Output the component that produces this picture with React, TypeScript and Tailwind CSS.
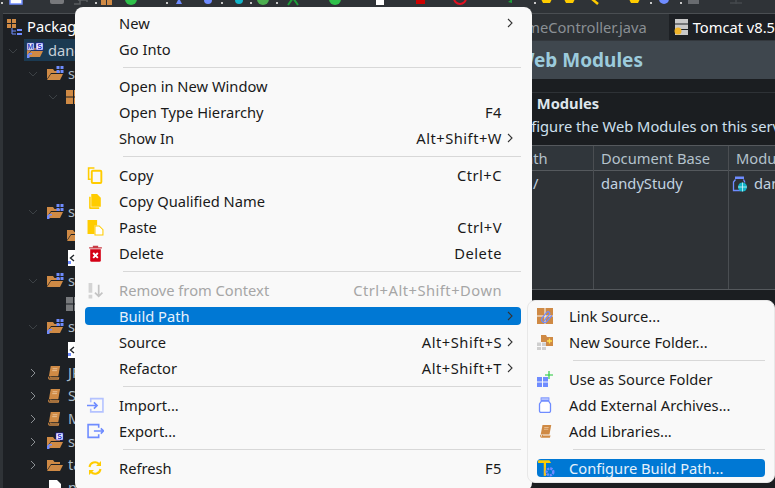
import type { ReactNode } from 'react';

const ORANGE = '#cf8a45';
const BLUE = '#6f8cff';
const YELLOW = '#ffcc00';

// icons are all drawn on a 16x16 box
function Ico({ children, size = 16 }: { children: ReactNode; size?: number }) {
  return (
    <svg width={size} height={size} viewBox="0 0 16 16" className="shrink-0" fill="none">
      {children}
    </svg>
  );
}

const CopyIcon = () => (
  <Ico size={17}>
    <path d="M7 1H1.500v10.500H3.500" stroke={YELLOW} strokeWidth="1.500" />
    <rect x="4.500" y="3.500" width="9" height="11.500" rx="1" stroke={YELLOW} strokeWidth="1.800" />
  </Ico>
);
const CopyNameIcon = () => (
  <Ico size={17}>
    <path d="M2 3.500h1.500v10h8V15H3a1 1 0 0 1-1-1z" fill={YELLOW} />
    <path d="M4 1h5.500L13 4.500V13H4z" fill={YELLOW} />
  </Ico>
);
const PasteIcon = () => (
  <Ico size={17}>
    <path d="M0.500 1h9v5H7v8H0.500z" fill={YELLOW} />
    <path d="M7.500 6.500h4l3.500 3.500v5H7.500z" fill="#fff" stroke={YELLOW} strokeWidth="1" />
  </Ico>
);
const DeleteIcon = () => (
  <Ico size={17}>
    <path d="M2 2h12v1.200H2zM5.500 0.800h5V2h-5z" fill="#c83a44" />
    <path d="M3 4h10v10.500a1.200 1.200 0 0 1-1.200 1.200H4.200A1.200 1.200 0 0 1 3 14.500z" fill="#d40015" />
    <path d="M5.800 7.500l4.400 4.600M10.200 7.500l-4.400 4.600" stroke="#fff" strokeWidth="1.800" />
  </Ico>
);
const RemoveIcon = () => (
  <Ico size={17}>
    <path d="M1.500 1h3.500v9H1.500zM1.500 12h3.500v3.500H1.500z" fill="#d4d4d4" />
    <path d="M11 2.500v11M7.500 10L11 13.500 14.500 10" stroke="#c4c4c4" strokeWidth="1.600" />
  </Ico>
);
const ImportIcon = () => (
  <Ico size={17}>
    <path d="M3.500 5V1.500h11.500v12.500H3.500v-3" stroke="#b4c2ff" strokeWidth="1.500" />
    <path d="M0 8h9M6.500 5L9.500 8l-3 3" stroke={BLUE} strokeWidth="1.500" />
  </Ico>
);
const ExportIcon = () => (
  <Ico size={17}>
    <path d="M11 4.500V1.500H1v12h10v-3" stroke={BLUE} strokeWidth="1.500" />
    <path d="M6.500 7.500h9M13 5L15.500 7.500 13 10" stroke={BLUE} strokeWidth="1.500" />
  </Ico>
);
const RefreshIcon = () => (
  <Ico size={16}>
    <path d="M2.500 7a5.500 5.500 0 0 1 9.500-3M13.500 9a5.500 5.500 0 0 1-9.500 3" stroke={YELLOW} strokeWidth="2" />
    <path d="M14 1v5h-5zM2 15v-5h5z" fill={YELLOW} />
  </Ico>
);

const LinkSourceIcon = () => (
  <Ico>
    <path d="M0 0h7.500v7.500H0zM8.500 0H16v7.500H8.500zM0 8.500h7.500V16H0zM8.500 8.500H16V16H8.500z" fill={ORANGE} />
    <path d="M7 13l5.500-6.500a1.800 1.800 0 0 0-2.600-2.400L5 10a3 3 0 0 0 4.300 4L15 7.500" stroke={BLUE} strokeWidth="1.200" />
  </Ico>
);
const NewSourceFolderIcon = () => (
  <Ico>
    <path d="M4 1h5l1 2h6v9H9V8H4z" fill={ORANGE} />
    <path d="M12.500 4.500v5M10 7h5" stroke="#ffe14d" strokeWidth="1.300" />
    <path d="M0 8.500h4V12H0zM5 8.500h4V12H5zM0 13h4v3H0zM5 13h4v3H5z" fill="#cfcfcf" />
  </Ico>
);
const UseAsSourceIcon = () => (
  <Ico>
    <path d="M0 6h5v4.500H0zM6 6h5v4.500H6zM0 11.500h5V16H0zM6 11.500h5V16H6z" fill={BLUE} />
    <path d="M12 0v8M8 4h8" stroke="#22c83a" strokeWidth="1.100" />
  </Ico>
);
const JarIcon = () => (
  <Ico>
    <rect x="4" y="0.800" width="8" height="2.600" fill="#b4c2ff" stroke={BLUE} strokeWidth="0.800" />
    <path d="M4.500 4L2.500 7v7a1.500 1.500 0 0 0 1.500 1.500h8a1.500 1.500 0 0 0 1.500-1.500V7l-2-3z" stroke={BLUE} strokeWidth="1.300" fill="#fff" />
  </Ico>
);
const BookIcon = ({ size = 16 }: { size?: number }) => (
  <Ico size={size}>
    <path d="M4 1h10l-2 11H2z" fill={ORANGE} />
    <path d="M2 12.500C1.500 14 2 15 3 15h9l.4-1.400H4l-.2-1.100" stroke={ORANGE} strokeWidth="1.200" />
    <path d="M6 4h5M5.600 6h5" stroke="#f2d2ad" strokeWidth="0.800" />
  </Ico>
);
const ConfigureIcon = () => (
  <Ico size={18}>
    <path d="M1 1h10l1.500 2.500H8v3.500H6V3.500H1z" fill={YELLOW} />
    <path d="M6 7h2v8H6z" fill="#f0c020" />
    <circle cx="11.500" cy="11.500" r="3" stroke={BLUE} strokeWidth="2.200" strokeDasharray="2 0.800" />
  </Ico>
);

const WarJarIcon = () => (
  <Ico>
    <rect x="3" y="0.500" width="9" height="2.500" fill={BLUE} />
    <path d="M3.500 3.500L1.500 6v8.500h8" stroke={BLUE} strokeWidth="1.300" />
    <path d="M11.500 3.500l1.500 3" stroke={BLUE} strokeWidth="1.300" />
    <circle cx="10.500" cy="11" r="4.500" fill="#12b5c9" />
    <path d="M6 11h9M10.500 6.500v9" stroke="#e9fbff" strokeWidth="0.700" />
  </Ico>
);

// little lettered badge from m2e / spring on top of the project folder
function Badge({ x, letter, border }: { x: number; letter: string; border: string }) {
  return (
    <g>
      <rect x={x} y="0" width="7" height="7" fill="#fff" stroke={border} strokeWidth="0.600" />
      <text x={x + 3.500} y="6" textAnchor="middle" fontSize="7" fontWeight="700" fill={border} fontFamily="Liberation Sans">
        {letter}
      </text>
    </g>
  );
}

// folder used by the tree, with optional overlays
function TreeFolder({ overlay }: { overlay?: 'grid' | 'ms' | 's' | 'grid-link' }) {
  return (
    <svg width="18" height="18" viewBox="0 0 18 18" className="shrink-0 overflow-visible" fill="none">
      <path d="M1 4h6l1.500 2H14v2H5L1 14z" fill={ORANGE} />
      <path d="M5 9h12l-3 6H1z" fill={ORANGE} />
      {(overlay === 'grid' || overlay === 'grid-link') && (
        <path d="M10.500 1h3v3h-3zM14.500 1h3v3h-3zM10.500 5h3v3h-3zM14.500 5h3v3h-3z" fill={BLUE} />
      )}
      {overlay === 's' && <Badge x={10} letter="S" border="#1a1acc" />}
      {overlay === 'ms' && (
        <g transform="translate(0 1)">
          <Badge x={1} letter="M" border="#2a3fbf" />
          <Badge x={10} letter="S" border="#1a1acc" />
        </g>
      )}
      {overlay && overlay !== 'grid' && <path d="M1 16v-3l2-2h3v1.500H3.500V16z" fill={BLUE} />}
    </svg>
  );
}

const OrangePackage = ({ grey }: { grey?: boolean }) => (
  <svg width="16" height="16" viewBox="0 0 16 16" className="shrink-0">
    <path d="M0 1h7v6.500H0zM8 1h7v6.500H8zM0 8.500h7V15H0zM8 8.500h7V15H8z" fill={grey ? '#77797c' : ORANGE} />
  </svg>
);

const XmlFile = () => (
  <svg width="16" height="18" viewBox="0 0 16 18" className="shrink-0 ml-[2px]">
    <path d="M0 1h14v16H0z" fill="#fff" />
    <path d="M6 6L2.500 9 6 12" stroke="#22262a" strokeWidth="1.400" fill="none" />
    <path d="M0 12h3v3H0z" fill={BLUE} />
  </svg>
);

const PlainFile = () => (
  <svg width="14" height="16" viewBox="0 0 14 16" className="shrink-0 ml-[2px]">
    <path d="M1 0h8l4 4v12H1z" fill="#fff" />
    <path d="M4 8h6v2H4z" fill="#33373b" />
  </svg>
);

const TreeBook = () => (
  <span className="ml-[1px] flex">
    <BookIcon size={15} />
  </span>
);

type Row = { chevron?: '>' | 'v'; depth: number; icon?: ReactNode; label?: string; selected?: boolean };

const treeRows: Row[] = [
  { chevron: 'v', depth: 0, icon: <TreeFolder overlay="ms" />, label: 'dandyStudy', selected: true },
  { chevron: 'v', depth: 1, icon: <TreeFolder overlay="grid" />, label: 'src/main/java' },
  { chevron: 'v', depth: 2, icon: <OrangePackage />, label: 'com.dandy' },
  { depth: 2 },
  { depth: 2 },
  { depth: 2 },
  { depth: 2 },
  { chevron: 'v', depth: 1, icon: <TreeFolder overlay="grid-link" />, label: 'src/main/resources' },
  { depth: 2, icon: <TreeFolder />, label: 'mapper' },
  { depth: 2, icon: <XmlFile />, label: 'log4j.xml' },
  { chevron: 'v', depth: 1, icon: <TreeFolder overlay="grid" />, label: 'src/test/java' },
  { depth: 2, icon: <OrangePackage grey />, label: 'com.dandy' },
  { chevron: 'v', depth: 1, icon: <TreeFolder overlay="grid-link" />, label: 'src/test/resources' },
  { depth: 2, icon: <XmlFile />, label: 'log4j.xml' },
  { chevron: '>', depth: 1, icon: <TreeBook />, label: 'JRE System Library' },
  { chevron: '>', depth: 1, icon: <TreeBook />, label: 'Spring Elements' },
  { chevron: '>', depth: 1, icon: <TreeBook />, label: 'Maven Dependencies' },
  { chevron: '>', depth: 1, icon: <TreeFolder overlay="s" />, label: 'src' },
  { chevron: '>', depth: 1, icon: <TreeFolder />, label: 'target' },
  { depth: 1, icon: <PlainFile />, label: 'pom.xml' },
];

function TreeRow({ row }: { row: Row }) {
  const indent = row.depth === 0 ? 'pl-0' : row.depth === 1 ? 'pl-[20px]' : 'pl-[40px]';
  return (
    <div className={`h-[23px] flex items-center ${indent}`}>
      <span className="w-[23px] pr-[3px] flex justify-center shrink-0">
        {row.chevron === '>' && (
          <svg width="8" height="10" viewBox="0 0 8 10" fill="none">
            <path d="M2 1l4 4-4 4" stroke="#8b8f93" strokeWidth="1" />
          </svg>
        )}
        {row.chevron === 'v' && (
          <svg width="10" height="8" viewBox="0 0 10 8" fill="none">
            <path d="M1 2l4 4 4-4" stroke="#3c4145" strokeWidth="1" />
          </svg>
        )}
      </span>
      <span className="w-[22px] shrink-0 flex items-center">{row.icon}</span>
      <span className={`whitespace-nowrap ${row.selected ? 'text-[#c6d0d8]' : 'text-[#a9bccb]'}`}>{row.label}</span>
    </div>
  );
}

type MenuItem =
  | 'sep'
  | {
      label: string;
      icon?: ReactNode;
      shortcut?: string;
      sub?: boolean;
      disabled?: boolean;
      active?: boolean;
    };

const mainMenu: MenuItem[] = [
  { label: 'New', sub: true },
  { label: 'Go Into' },
  'sep',
  { label: 'Open in New Window' },
  { label: 'Open Type Hierarchy', shortcut: 'F4' },
  { label: 'Show In', shortcut: 'Alt+Shift+W', sub: true },
  'sep',
  { label: 'Copy', shortcut: 'Ctrl+C', icon: <CopyIcon /> },
  { label: 'Copy Qualified Name', icon: <CopyNameIcon /> },
  { label: 'Paste', shortcut: 'Ctrl+V', icon: <PasteIcon /> },
  { label: 'Delete', shortcut: 'Delete', icon: <DeleteIcon /> },
  'sep',
  { label: 'Remove from Context', shortcut: 'Ctrl+Alt+Shift+Down', disabled: true, icon: <RemoveIcon /> },
  { label: 'Build Path', sub: true, active: true },
  { label: 'Source', shortcut: 'Alt+Shift+S', sub: true },
  { label: 'Refactor', shortcut: 'Alt+Shift+T', sub: true },
  'sep',
  { label: 'Import...', icon: <ImportIcon /> },
  { label: 'Export...', icon: <ExportIcon /> },
  'sep',
  { label: 'Refresh', shortcut: 'F5', icon: <RefreshIcon /> },
];

const buildPathMenu: MenuItem[] = [
  { label: 'Link Source...', icon: <LinkSourceIcon /> },
  { label: 'New Source Folder...', icon: <NewSourceFolderIcon /> },
  'sep',
  { label: 'Use as Source Folder', icon: <UseAsSourceIcon /> },
  { label: 'Add External Archives...', icon: <JarIcon /> },
  {
    label: 'Add Libraries...',
    icon: (
      <span className="ml-[2px] flex">
        <BookIcon size={14} />
      </span>
    ),
  },
  'sep',
  { label: 'Configure Build Path...', active: true, icon: <ConfigureIcon /> },
];

function MenuRows({ items, nested }: { items: MenuItem[]; nested?: boolean }) {
  return (
    <>
      {items.map((item, i) => {
        if (item === 'sep') {
          return (
            <div key={i} className={`h-[11px] flex items-center ${nested ? 'pl-[36px]' : 'pl-[38px]'}`}>
              <div className="h-px w-full bg-[#d8d8d8]" />
            </div>
          );
        }
        return (
          <div key={i} className="h-[26px] flex items-center">
            <div
              className={`h-[18px] w-full flex items-center rounded-[4px] ${
                item.active ? 'bg-[#0078d4]' : ''
              } ${item.active ? 'text-[#e6f1fb]' : item.disabled ? 'text-[#a6a6a6]' : 'text-[#1a1a1a]'}`}
            >
              <span className={`shrink-0 flex justify-start ${nested ? 'w-[32px]' : 'w-[34px] pl-[2px]'}`}>{item.icon}</span>
              <span className="whitespace-nowrap">{item.label}</span>
              {item.shortcut && (
                <span className={`ml-auto whitespace-nowrap tracking-[0.5px] ${item.disabled ? 'text-[#a6a6a6]' : 'text-[#1a1a1a]'}`}>
                  {item.shortcut}
                </span>
              )}
              {(item.shortcut || item.sub) && (
                <span className={`w-[19px] pr-[3px] shrink-0 flex justify-center ${item.sub ? '' : 'invisible'} ${item.shortcut ? '' : 'ml-auto'}`}>
                  <svg width="6" height="10" viewBox="0 0 6 10" fill="none">
                    <path d="M1 1l4 4-4 4" stroke="#333" strokeWidth="1.100" />
                  </svg>
                </span>
              )}
            </div>
          </div>
        );
      })}
    </>
  );
}

function Toolbar() {
  return (
    <div className="h-[13px] shrink-0 bg-[#2f3337]">
      <svg width="775" height="13" viewBox="0 0 775 13" fill="none">
        {[1, 95, 166, 221, 250, 276, 534, 650, 680].map((x) => (
          <rect key={x} x={x} y="2" width="2" height="2" fill="#c8c8c8" />
        ))}
        <rect x="10" y="-2" width="12" height="6" fill="#fff" stroke={BLUE} strokeWidth="1.500" />
        <rect x="50" y="-3" width="14" height="7" rx="2" fill="#77797c" />
        <path d="M74 4h6V0M78 0h9v2" stroke="#595d60" strokeWidth="1.500" />
        <path d="M101-1h5v6h-5zM107-1h5v6h-5z" fill={ORANGE} />
        <circle cx="131" cy="-1" r="6" fill="#2ec04a" />
        <path d="M179-2l3 6h-6z" fill={BLUE} />
        <circle cx="208" cy="0" r="4" fill={BLUE} />
        <circle cx="239" cy="0" r="4" fill="#12b5c9" />
        <circle cx="263" cy="-1" r="6" fill="#4caf50" />
        <path d="M288 5l5-7 5 7" stroke="#1e9e3a" strokeWidth="2" />
        <circle cx="335" cy="-1" r="6" fill="#2ec04a" />
        <rect x="376" y="0" width="8" height="5" fill="#fff" />
        <rect x="416" y="-2" width="9" height="6" fill="#cc0000" />
        <circle cx="460" cy="-2" r="6" stroke="#e01020" strokeWidth="2" />
        <path d="M508 2l4-3v4z" fill="#1e9e3a" />
        <path d="M541-1h11l-2 4h-7zM564-1h11l-2 4h-7zM629-1h11l-2 4h-7z" fill={YELLOW} />
        <path d="M592-1l6 5" stroke={YELLOW} strokeWidth="2.500" />
        <circle cx="664" cy="-1" r="5" fill={BLUE} />
        <rect x="688" y="-2" width="11" height="6" fill="#686b6f" />
        <path d="M730 3h12M736 0v4" stroke="#45494d" strokeWidth="1.500" />
      </svg>
    </div>
  );
}

export default function App() {
  return (
    <div className="relative w-[775px] h-[488px] overflow-hidden flex flex-col bg-[#2f3337] font-['Noto_Sans',sans-serif] text-[14.7px] leading-none">
      <Toolbar />
      <div className="flex-1 min-h-0 flex pl-[3px]">
        {/* package explorer */}
        <div className="w-[237px] shrink-0 bg-[#1d2024] border-t border-[#4a4e52]">
          <div className="h-[25px] flex items-center pl-[4px] gap-[4px]">
            <svg width="16" height="18" viewBox="0 0 16 18" className="shrink-0">
              <path d="M0 1h4v4H0zM5 1h4v4H5zM0 6h4v4H0zM5 6h4v4H5z" fill={ORANGE} />
              <path d="M5 10v6M5 13h4M5 16h4" stroke={BLUE} strokeWidth="1" fill="none" />
              <path d="M10 11h5v2h-5zM10 15h5v2h-5z" fill={BLUE} />
            </svg>
            <span className="text-white">Package Explorer</span>
          </div>
          <div className="relative">
            <div className="absolute left-[21px] top-0 w-[60px] h-[22px] bg-[#1b3a52]" />
            <div className="relative">
              {treeRows.map((row, i) => (
                <TreeRow key={i} row={row} />
              ))}
            </div>
          </div>
        </div>

        {/* server editor */}
        <div className="flex-1 min-w-0 flex flex-col overflow-hidden">
          <div className="h-[27px] shrink-0 flex border-t border-[#4a4e52] pl-[150px] bg-[#2d3135]">
            <span className="whitespace-nowrap self-center text-[#8a8f94] w-[282px] text-right pr-[22px]">HomeController.java</span>
            <div className="flex-1 bg-[#1d2024] flex items-center pl-[5px] gap-[4px] whitespace-nowrap text-white">
              <svg width="15" height="16" viewBox="0 0 15 16" className="shrink-0">
                <path d="M1 0h13v4.500H1zM1 5.500h13V10H1zM1 11h13v5H1z" fill="#c8c8c8" />
                <circle cx="4" cy="12" r="3.500" fill="#f0b429" />
              </svg>
              Tomcat v8.5
            </div>
          </div>
          <div className="h-[39px] shrink-0 bg-[#3f474e] flex items-center pl-[276px] text-[19px] font-bold text-[#9ccbdc] whitespace-nowrap border-t border-[#33383d]">
            Web Modules
          </div>
          <div className="h-[13px] shrink-0 bg-[#1b1e21]" />
          <div className="flex-1 flex flex-col bg-[#1b1e21] border-t border-[#2e3236]">
            <div className="h-[52px] shrink-0 pl-[258px] whitespace-nowrap">
              <div className="h-[21px] flex items-center font-bold text-[#dfe6ec] [word-spacing:3px]">Web Modules</div>
              <div className="h-[25px] flex items-center text-[#cfe0ee] pl-[6px]">Configure the Web Modules on this server</div>
            </div>
            <div className="h-[145px] shrink-0 border-y border-[#55595d] bg-[#2e3236] flex text-[#c2d3e0] whitespace-nowrap">
              <div className="w-[354px] shrink-0 border-r border-[#4a4e52]">
                <div className="h-[25px] bg-[#30363b] border-b border-[#55595d] flex items-center pl-[276px] text-[#b4c2cc]">Path</div>
                <div className="h-[25px] flex items-center pl-[293px]">/</div>
              </div>
              <div className="w-[135px] shrink-0 border-r border-[#4a4e52]">
                <div className="h-[25px] bg-[#30363b] border-b border-[#55595d] flex items-center pl-[7px] text-[#b4c2cc]">Document Base</div>
                <div className="h-[25px] flex items-center pl-[7px]">dandyStudy</div>
              </div>
              <div className="flex-1">
                <div className="h-[25px] bg-[#30363b] border-b border-[#55595d] flex items-center pl-[7px] text-[#b4c2cc]">Module</div>
                <div className="h-[25px] flex items-center pl-[3px] gap-[6px]">
                  <WarJarIcon />
                  dandyStudy
                </div>
              </div>
            </div>
          </div>
        </div>
      </div>

      {/* context menu */}
      <div className="absolute left-[75px] top-[7px] w-[457px] rounded-[8px] bg-[#f9f9f9] pt-[3px] pb-[10px] pl-[10px] pr-[11px]">
        <MenuRows items={mainMenu} />
      </div>

      {/* build path submenu */}
      <div className="absolute left-[527px] top-[300px] w-[248px] h-[183px] rounded-[8px] bg-[#f9f9f9] border border-[#e8e8e8] pt-[2px] pl-[9px] pr-[9px]">
        <MenuRows items={buildPathMenu} nested />
      </div>
    </div>
  );
}
